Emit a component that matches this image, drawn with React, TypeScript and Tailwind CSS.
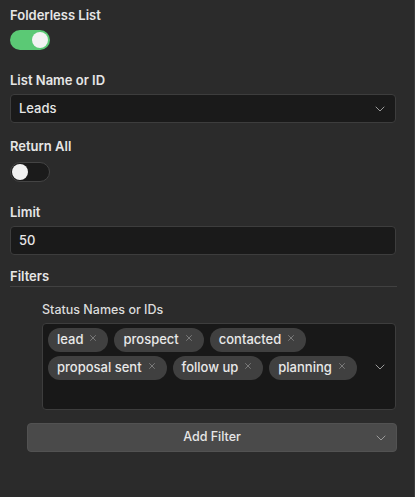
import { ChevronDown, X } from "lucide-react";

const statuses = ["lead", "prospect", "contacted", "proposal sent", "follow up", "planning"];

function Label({ children }: { children: React.ReactNode }) {
    return <p className="text-[13px] font-semibold text-[#e6e6e6] leading-4">{children}</p>;
}

function Toggle({ on }: { on: boolean }) {
    return (
        <div
            className={
                on
                    ? "w-10 h-5 rounded-full bg-[#5bc975] flex items-center justify-end px-[2px]"
                    : "w-10 h-5 rounded-full bg-[#1b1b1b] border border-[#444] flex items-center justify-start px-px"
            }
        >
            <div className="w-4 h-4 rounded-full bg-[#f2f2f2]" />
        </div>
    );
}

function Chevron() {
    return <ChevronDown className="w-4 h-4 text-[#9a9a9a]" strokeWidth={1.5} />;
}

export default function App() {
    return (
        <div
            className="w-[415px] h-[497px] bg-[#2b2b2b] border-r border-[#3c3c3c] px-[10px] pt-[7px] text-[#e6e6e6]"
            style={{ fontFamily: "Inter, 'Noto Sans', sans-serif" }}
        >
            <Label>Folderless List</Label>
            <div className="mt-[7px]">
                <Toggle on />
            </div>

            <div className="mt-[22px]">
                <Label>List Name or ID</Label>
            </div>
            <div className="mt-[6px] h-[29px] w-[386px] rounded bg-[#1a1a1a] border border-[#3d3d3d] flex items-center justify-between pl-[8px] pr-[7px]">
                <span className="text-[13px] font-medium">Leads</span>
                <Chevron />
            </div>

            <div className="mt-[15px]">
                <Label>Return All</Label>
            </div>
            <div className="mt-[8px]">
                <Toggle on={false} />
            </div>

            <div className="mt-[22px]">
                <Label>Limit</Label>
            </div>
            <div className="mt-[6px] h-[29px] w-[386px] rounded bg-[#1a1a1a] border border-[#3d3d3d] flex items-center pl-[8px]">
                <span className="text-[13px] font-medium">50</span>
            </div>

            <div className="mt-[13px] w-[387px] border-b border-[#414141] pb-[2px]">
                <Label>Filters</Label>
            </div>

            <div className="pl-[32px] mt-[15px]">
                <p className="text-[12.5px] font-medium text-[#dcdcdc] leading-4">Status Names or IDs</p>
                <div className="mt-[5px] w-[354px] h-[87px] rounded bg-[#181818] border border-[#3d3d3d] flex items-start pl-[5px] pr-[7px] pt-[4px]">
                    <div className="flex flex-wrap gap-x-[6px] gap-y-[4px] w-[320px]">
                        {statuses.map((s) => (
                            <span
                                key={s}
                                className="h-[24px] rounded-full bg-[#404040] flex items-center pl-[9px] pr-[10px] text-[13px] font-medium text-[#e8e8e8]"
                            >
                                {s}
                                <X className="w-[10px] h-[10px] ml-[5px] -mt-[5px] text-[#9c9c9c]" strokeWidth={1.5} />
                            </span>
                        ))}
                    </div>
                    <div className="ml-auto mt-[31px]">
                        <Chevron />
                    </div>
                </div>
            </div>

            <div className="ml-[17px] mt-[13px] w-[370px] h-[29px] rounded bg-[#4a4a4a] border border-[#525252] relative flex items-center justify-center">
                <span className="text-[12.5px] font-medium text-[#e6e6e6]">Add Filter</span>
                <div className="absolute right-[7px] top-[6px]">
                    <Chevron />
                </div>
            </div>
        </div>
    );
}
